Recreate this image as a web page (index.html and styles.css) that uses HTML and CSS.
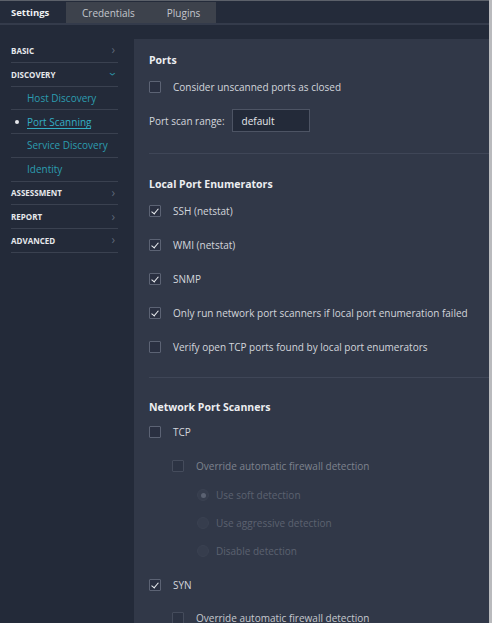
FILE: index.html
```html
<!DOCTYPE html>
<html>
<head>
<meta charset="utf-8">
<link rel="stylesheet" href="styles.css">
</head>
<body>
<div class="app">
  <div class="tabbar">
    <div class="tab active">Settings</div>
    <div class="tab">Credentials</div>
    <div class="tab">Plugins</div>
  </div>
  <div class="content">
    <nav class="sidebar">
      <div class="nav-item group"><span>BASIC</span><span class="chev">&#8250;</span></div>
      <div class="nav-item group"><span>DISCOVERY</span><span class="chev open">&#8250;</span></div>
      <div class="nav-item sub">Host Discovery</div>
      <div class="nav-item sub current"><span class="dot"></span><span class="link">Port Scanning</span></div>
      <div class="nav-item sub">Service Discovery</div>
      <div class="nav-item sub">Identity</div>
      <div class="nav-item group"><span>ASSESSMENT</span><span class="chev">&#8250;</span></div>
      <div class="nav-item group"><span>REPORT</span><span class="chev">&#8250;</span></div>
      <div class="nav-item group"><span>ADVANCED</span><span class="chev">&#8250;</span></div>
    </nav>
    <main class="panel">
      <section class="section first">
        <h2>Ports</h2>
        <div class="row"><span class="cb"></span><span>Consider unscanned ports as closed</span></div>
        <div class="row range"><span class="label">Port scan range:</span><span class="input">default</span></div>
      </section>
      <section class="section">
        <h2>Local Port Enumerators</h2>
        <div class="row"><span class="cb checked"></span><span>SSH (netstat)</span></div>
        <div class="row"><span class="cb checked"></span><span>WMI (netstat)</span></div>
        <div class="row"><span class="cb checked"></span><span>SNMP</span></div>
        <div class="row"><span class="cb checked"></span><span>Only run network port scanners if local port enumeration failed</span></div>
        <div class="row"><span class="cb"></span><span>Verify open TCP ports found by local port enumerators</span></div>
      </section>
      <section class="section last">
        <h2>Network Port Scanners</h2>
        <div class="row"><span class="cb"></span><span>TCP</span></div>
        <div class="row indent sub-row disabled"><span class="cb dim"></span><span>Override automatic firewall detection</span></div>
        <div class="row radio-row"><span class="radio on"></span><span>Use soft detection</span></div>
        <div class="row radio-row"><span class="radio"></span><span>Use aggressive detection</span></div>
        <div class="row radio-row"><span class="radio"></span><span>Disable detection</span></div>
        <div class="row syn-row"><span class="cb checked"></span><span>SYN</span></div>
        <div class="row indent"><span class="cb dim"></span><span>Override automatic firewall detection</span></div>
      </section>
    </main>
  </div>
</div>
</body>
</html>
```
FILE: styles.css
```css
* { box-sizing: border-box; }
html, body { margin: 0; padding: 0; }
body {
  width: 492px;
  height: 623px;
  overflow: hidden;
  background: #b9babd;
  font-family: "Open Sans", "DejaVu Sans", sans-serif;
  color: #d3d6dc;
}
.app {
  width: 489px;
  height: 623px;
  background: #232a39;
  border-top: 1px solid #5c616a;
  display: flex;
  flex-direction: column;
  overflow: hidden;
}
.tabbar {
  height: 24px;
  display: flex;
  border-bottom: 2px solid #343b4b;
  background: #242b3a;
}
.tab {
  padding: 0 16px;
  display: flex;
  align-items: center;
  font-size: 10px;
  color: #c3c6cc;
  background: #3d424c;
  margin-top: 1px;
}
.tab.active {
  width: 66px;
  padding: 0 0 0 11px;
  background: #242b3a;
  color: #f1f2f4;
  font-weight: 700;
  font-size: 9.5px;
  margin-top: 0;
}
.content {
  flex: 1;
  display: flex;
  min-height: 0;
}
.sidebar {
  width: 134px;
  padding: 14px 0 0 11px;
  flex-shrink: 0;
}
.nav-item {
  width: 107px;
  height: 23.75px;
  border-bottom: 1px solid #3a4150;
  display: flex;
  align-items: center;
  font-size: 10px;
}
.nav-item.group {
  justify-content: space-between;
  font-size: 8px;
  font-weight: 700;
  color: #e6e8ec;
  padding-right: 3px;
}
.chev {
  color: #5e6677;
  font-size: 12px;
  font-weight: 400;
  line-height: 1;
}
.chev.open {
  color: #2d96a8;
  transform: rotate(90deg);
}
.nav-item.sub {
  padding-left: 16px;
  color: #2c9db0;
}
.nav-item.current {
  padding-left: 4px;
  color: #34afc4;
}
.dot {
  width: 4px;
  height: 4px;
  border-radius: 50%;
  background: #e6e8ec;
  margin-right: 8px;
}
.link {
  border-bottom: 1px solid #34afc4;
  line-height: 12px;
  margin-top: 2px;
}
.panel {
  flex: 1;
  margin-top: 14px;
  background: #313848;
  min-width: 0;
}
.section {
  margin-left: 15px;
  padding: 23px 0 13px;
  border-bottom: 1px solid #3f4657;
}
.section.first {
  padding-top: 14px;
  padding-bottom: 16px;
}
.section.last {
  padding-top: 22px;
  border-bottom: none;
}
h2 {
  margin: 0 0 3px;
  font-size: 10.5px;
  line-height: 14px;
  font-weight: 700;
  color: #eceef1;
}
.section.last h2 {
  margin-bottom: 1px;
}
.row {
  height: 34px;
  display: flex;
  align-items: center;
  font-size: 10px;
  gap: 12px;
}
.row.range {
  height: 33px;
  gap: 7px;
}
.input {
  width: 78px;
  height: 23px;
  border: 1px solid #4d5464;
  background: #232a39;
  color: #e6e8ec;
  display: flex;
  align-items: center;
  padding-left: 9px;
}
.cb {
  width: 12px;
  height: 12px;
  border: 1px solid #5c6374;
  background: #2a3041;
  border-radius: 1px;
  flex-shrink: 0;
  position: relative;
}
.cb.checked::after {
  content: "";
  position: absolute;
  left: 3px;
  top: 1px;
  width: 3px;
  height: 6px;
  border: solid #eef0f3;
  border-width: 0 1.5px 1.5px 0;
  transform: rotate(40deg);
}
.cb.dim {
  border-color: #454c5c;
  background: #2c3343;
}
.row.indent {
  padding-left: 23px;
  color: #c6c9cf;
}
.row.sub-row {
  height: 32px;
  padding-top: 2px;
}
.row.disabled {
  color: #7e838e;
}
.row.radio-row {
  height: 28px;
  padding-left: 48px;
  color: #5c6270;
  gap: 7px;
}
.row.syn-row {
  height: 36px;
  padding-top: 3px;
}
.radio {
  width: 12px;
  height: 12px;
  border-radius: 50%;
  background: #363d4d;
  border: 1px solid #3a4151;
  flex-shrink: 0;
  display: flex;
  align-items: center;
  justify-content: center;
}
.radio.on::after {
  content: "";
  width: 5px;
  height: 5px;
  border-radius: 50%;
  background: #5b6272;
}
```
